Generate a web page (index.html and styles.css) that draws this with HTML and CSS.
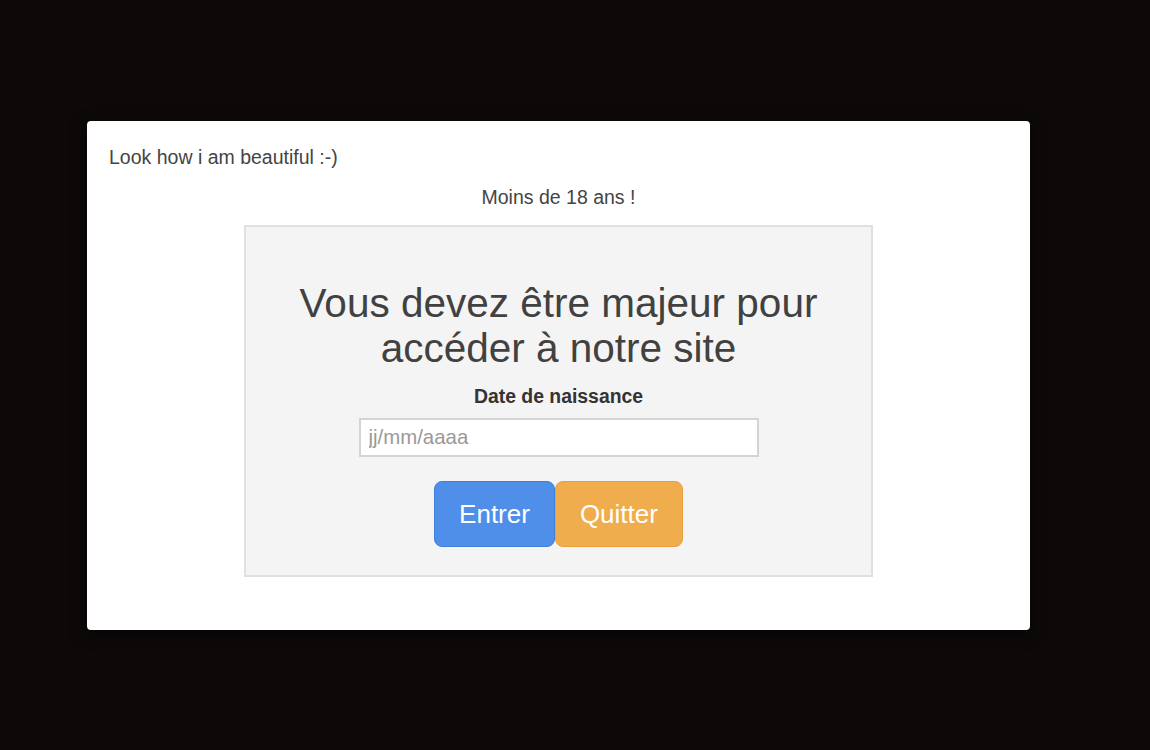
FILE: index.html
```html
<!DOCTYPE html>
<html lang="fr">
<head>
  <meta charset="UTF-8">
  <meta name="viewport" content="width=device-width, initial-scale=1.0">
  <title>Age verification</title>
  <link rel="stylesheet" href="styles.css">
</head>
<body>
  <div class="modal">
    <p class="intro">Look how i am beautiful :-)</p>
    <p class="notice">Moins de 18 ans !</p>

    <!-- Age gate box -->
    <div class="gate">
      <h1>Vous devez être majeur pour accéder à notre site</h1>
      <label for="birthdate" class="label">Date de naissance</label>
      <input type="text" id="birthdate" placeholder="jj/mm/aaaa" />
      <div class="actions">
        <button class="btn enter">Entrer</button>
        <button class="btn quit">Quitter</button>
      </div>
    </div>
  </div>
</body>
</html>
```

FILE: styles.css
```css
body {
  margin: 0;
  min-height: 100vh;
  background-color: #0c0908;
  font-family: "Liberation Sans", Arial, sans-serif;
  color: #444;
}

.modal {
  box-sizing: border-box;
  width: 943px;
  height: 509px;
  margin: 121px 0 0 87px;
  padding: 24px 22px;
  background: #ffffff;
  border-radius: 4px;
  box-shadow: 0 4px 16px rgba(0, 0, 0, 0.5);
}

.intro {
  margin: 0;
  font-size: 19.5px;
  line-height: 24px;
}

.notice {
  margin: 16px 0;
  font-size: 19.5px;
  line-height: 24px;
  text-align: center;
}

.gate {
  box-sizing: border-box;
  width: 629px;
  height: 352px;
  margin: 0 auto;
  padding: 54px 40px 28px;
  background: #f4f4f4;
  border: 2px solid #e0e0e0;
  display: flex;
  flex-direction: column;
  align-items: center;
}

h1 {
  margin: 0 0 13px;
  font-size: 40.5px;
  line-height: 45px;
  font-weight: normal;
  text-align: center;
  color: #414141;
}

.label {
  font-size: 19.4px;
  line-height: 24px;
  font-weight: bold;
  color: #333;
}

input {
  box-sizing: border-box;
  width: 400px;
  height: 39px;
  margin-top: 10px;
  padding: 0 8px;
  font-family: inherit;
  font-size: 20.4px;
  color: #444;
  background: #fff;
  border: 2px solid #d4d4d4;
  outline: none;
}

input::placeholder {
  color: #999;
}

.actions {
  display: flex;
  margin-top: 24px;
}

.btn {
  padding: 17px 24px;
  font-family: inherit;
  font-size: 26px;
  line-height: 30px;
  color: #fff;
  border-radius: 8px;
  cursor: pointer;
}

.enter {
  background: #4f8fea;
  border: 1px solid #3f7fdc;
}

.quit {
  background: #efad4d;
  border: 1px solid #e8a040;
}
```
